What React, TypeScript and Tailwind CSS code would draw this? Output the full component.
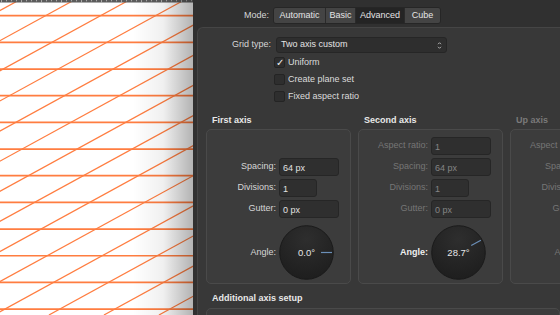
import React from 'react'

const font = "font-['Liberation_Sans',Arial,sans-serif]"

function Canvas() {
  const hs = Array.from({ length: 12 }, (_, i) => 15.7 + i * 26.67)
  const slope = 0.5475
  const ds = Array.from({ length: 18 }, (_, i) => 52 + (i - 4) * 55)
  return (
    <div className="relative w-[193px] h-[315px] shrink-0 bg-white overflow-hidden">
      <svg width="193" height="315" viewBox="0 0 193 315" className="block">
        {hs.map((y) => (
          <line key={y} x1="0" y1={y} x2="193" y2={y} stroke="#ff7d40" strokeWidth="1.7" />
        ))}
        {ds.map((x0) => (
          <line
            key={x0}
            x1={x0 + 42.3 / slope}
            y1="0"
            x2={x0 - (315 - 42.3) / slope}
            y2="315"
            stroke="#ff7d40"
            strokeWidth="1.25"
          />
        ))}
        <rect x="0" y="0" width="193" height="2.5" fill="#5b5b5b" />
        {Array.from({ length: 40 }, (_, i) => (
          <rect key={i} x={i * 5 + 1} y="0" width="0.8" height={i % 4 === 0 ? 2.5 : 1.3} fill="#bdbdbd" />
        ))}
      </svg>
      <div className="absolute right-0 top-0 h-full w-[60px] bg-linear-to-r from-transparent via-black/[0.06] to-black/30" />
    </div>
  )
}

function Field({
  label,
  value,
  w = 'w-[60px]',
  disabled = false,
  hidden = false,
}: {
  label: string
  value: string
  w?: string
  disabled?: boolean
  hidden?: boolean
}) {
  return (
    <div className={`flex items-center gap-[3px] h-[18px] ${hidden ? 'invisible' : ''}`}>
      <div className={`w-[69px] shrink-0 text-right whitespace-nowrap ${disabled ? 'text-[#767676]' : 'text-[#d6d6d6]'}`}>
        {label}
      </div>
      <div
        className={`${w} h-[18px] shrink-0 rounded-[3px] bg-[#2f2f2f] border border-[#262626] pl-[3px] pt-[3px] leading-[13px] ${disabled ? 'text-[#858585]' : 'text-[#e2e2e2]'}`}
      >
        {value}
      </div>
    </div>
  )
}

function Dial({ angle, id }: { angle: number; id: string }) {
  const c = 27.5
  const a = (angle * Math.PI) / 180
  const r1 = 14.5
  const r2 = 25.5
  return (
    <svg width="55" height="55" viewBox="0 0 55 55" className="block shrink-0">
      <defs>
        <radialGradient id={id} cx="0.5" cy="0.25" r="0.8">
          <stop offset="0" stopColor="#2e2e2e" />
          <stop offset="1" stopColor="#1d1d1d" />
        </radialGradient>
      </defs>
      <circle cx={c} cy={c} r="26.8" fill={`url(#${id})`} stroke="#1a1a1a" strokeWidth="1" />
      <line
        x1={c + r1 * Math.cos(a)}
        y1={c - r1 * Math.sin(a)}
        x2={c + r2 * Math.cos(a)}
        y2={c - r2 * Math.sin(a)}
        stroke="#6b8fb8"
        strokeWidth="1.2"
      />
      <text x={c} y={c + 3.3} textAnchor="middle" fontSize="9.5" fill="#e6e6e6" fontFamily="Liberation Sans, Arial, sans-serif">
        {angle.toFixed(1)}°
      </text>
    </svg>
  )
}

function AxisBox({
  title,
  mode,
}: {
  title: string
  mode: 'first' | 'second' | 'up'
}) {
  const dis = mode !== 'first'
  return (
    <div className="flex flex-col w-[145px] shrink-0">
      <div className={`h-[12px] leading-[12px] pl-[6px] font-semibold whitespace-nowrap ${mode === 'up' ? 'text-[#7a7a7a]' : 'text-[#e8e8e8]'}`}>
        {title}
      </div>
      <div className="mt-[3px] h-[155px] rounded-[5px] bg-[#3c3c3c] border border-[#4a4a4a] pt-[7px] flex flex-col gap-[3px]">
        <Field label="Aspect ratio:" value="1" disabled hidden={mode === 'first'} />
        <Field label="Spacing:" value="64 px" disabled={dis} />
        <Field label="Divisions:" value="1" w="w-[38px]" disabled={dis} />
        <Field label="Gutter:" value="0 px" disabled={dis} />
        <div className="flex items-center gap-[3px] mt-[4px]">
          <div
            className={`w-[69px] shrink-0 text-right ${mode === 'up' ? 'text-[#767676]' : mode === 'second' ? 'text-[#f0f0f0] font-bold' : 'text-[#d6d6d6]'}`}
          >
            Angle:
          </div>
          <Dial angle={mode === 'second' ? 28.7 : 0} id={`dial-${mode}`} />
        </div>
      </div>
    </div>
  )
}

function Check({ label, checked = false }: { label: string; checked?: boolean }) {
  return (
    <div className="h-[17px] flex items-center gap-[3px] ml-[76px]">
      <div className="w-[11px] h-[11px] rounded-[2px] bg-[#2e2e2e] border border-[#242424] flex items-center justify-center text-[10px] leading-none text-[#f0f0f0]">
        {checked ? '✓' : ''}
      </div>
      <span className="text-[#dcdcdc] pt-[1px]">{label}</span>
    </div>
  )
}

export default function App() {
  const modes = [
    { name: 'Automatic', w: 'w-[51px]' },
    { name: 'Basic', w: 'w-[30px]' },
    { name: 'Advanced', w: 'w-[49px]' },
    { name: 'Cube', w: 'w-[36px]' },
  ]
  return (
    <div className={`flex w-[560px] h-[315px] overflow-hidden text-[9px] ${font}`}>
      <Canvas />
      <div className="flex-1 min-w-0 bg-[#303030] flex flex-col">
        <div className="h-[27px] shrink-0 flex items-start pt-[7px] gap-[4px]">
          <div className="w-[76px] text-right text-[#d6d6d6] leading-[17px]">Mode:</div>
          <div className="flex h-[17px] rounded-[3px] border border-[#262626] overflow-hidden">
            {modes.map((m, i) => (
              <div
                key={m.name}
                className={`${m.w} h-full flex items-center justify-center text-[#e4e4e4] ${i > 0 ? 'border-l border-[#2a2a2a]' : ''} ${m.name === 'Advanced' ? 'bg-[#242424]' : 'bg-[#444444]'}`}
              >
                {m.name}
              </div>
            ))}
          </div>
        </div>
        <div className="flex-1 ml-[4px] bg-[#383838] border-t border-l border-[#454545] rounded-tl-[6px] pt-[9px] flex flex-col">
          <div className="flex items-center gap-[5px] h-[16px]">
            <div className="w-[73px] text-right text-[#d6d6d6]">Grid type:</div>
            <div className="w-[171px] h-[16px] rounded-[3px] bg-[#2e2e2e] border border-[#262626] flex items-center justify-between pl-[4px] pr-[4px] text-[#e4e4e4]">
              <span>Two axis custom</span>
              <svg width="5" height="9" viewBox="0 0 5 9">
                <path d="M1 3.2 L2.5 1.7 L4 3.2" stroke="#bdbdbd" strokeWidth="0.9" fill="none" />
                <path d="M1 5.8 L2.5 7.3 L4 5.8" stroke="#bdbdbd" strokeWidth="0.9" fill="none" />
              </svg>
            </div>
          </div>
          <div className="mt-[1px] flex flex-col">
            <Check label="Uniform" checked />
            <Check label="Create plane set" />
            <Check label="Fixed aspect ratio" />
          </div>
          <div className="mt-[9px] pl-[8px] flex gap-[7px]">
            <AxisBox title="First axis" mode="first" />
            <AxisBox title="Second axis" mode="second" />
            <AxisBox title="Up axis" mode="up" />
          </div>
          <div className="mt-[8px] pl-[14px] h-[12px] leading-[12px] font-semibold text-[#e8e8e8]">
            Additional axis setup
          </div>
          <div className="mt-[4px] ml-[8px] h-[20px] rounded-[5px] bg-[#3c3c3c] border border-[#4a4a4a]" />
        </div>
      </div>
    </div>
  )
}
